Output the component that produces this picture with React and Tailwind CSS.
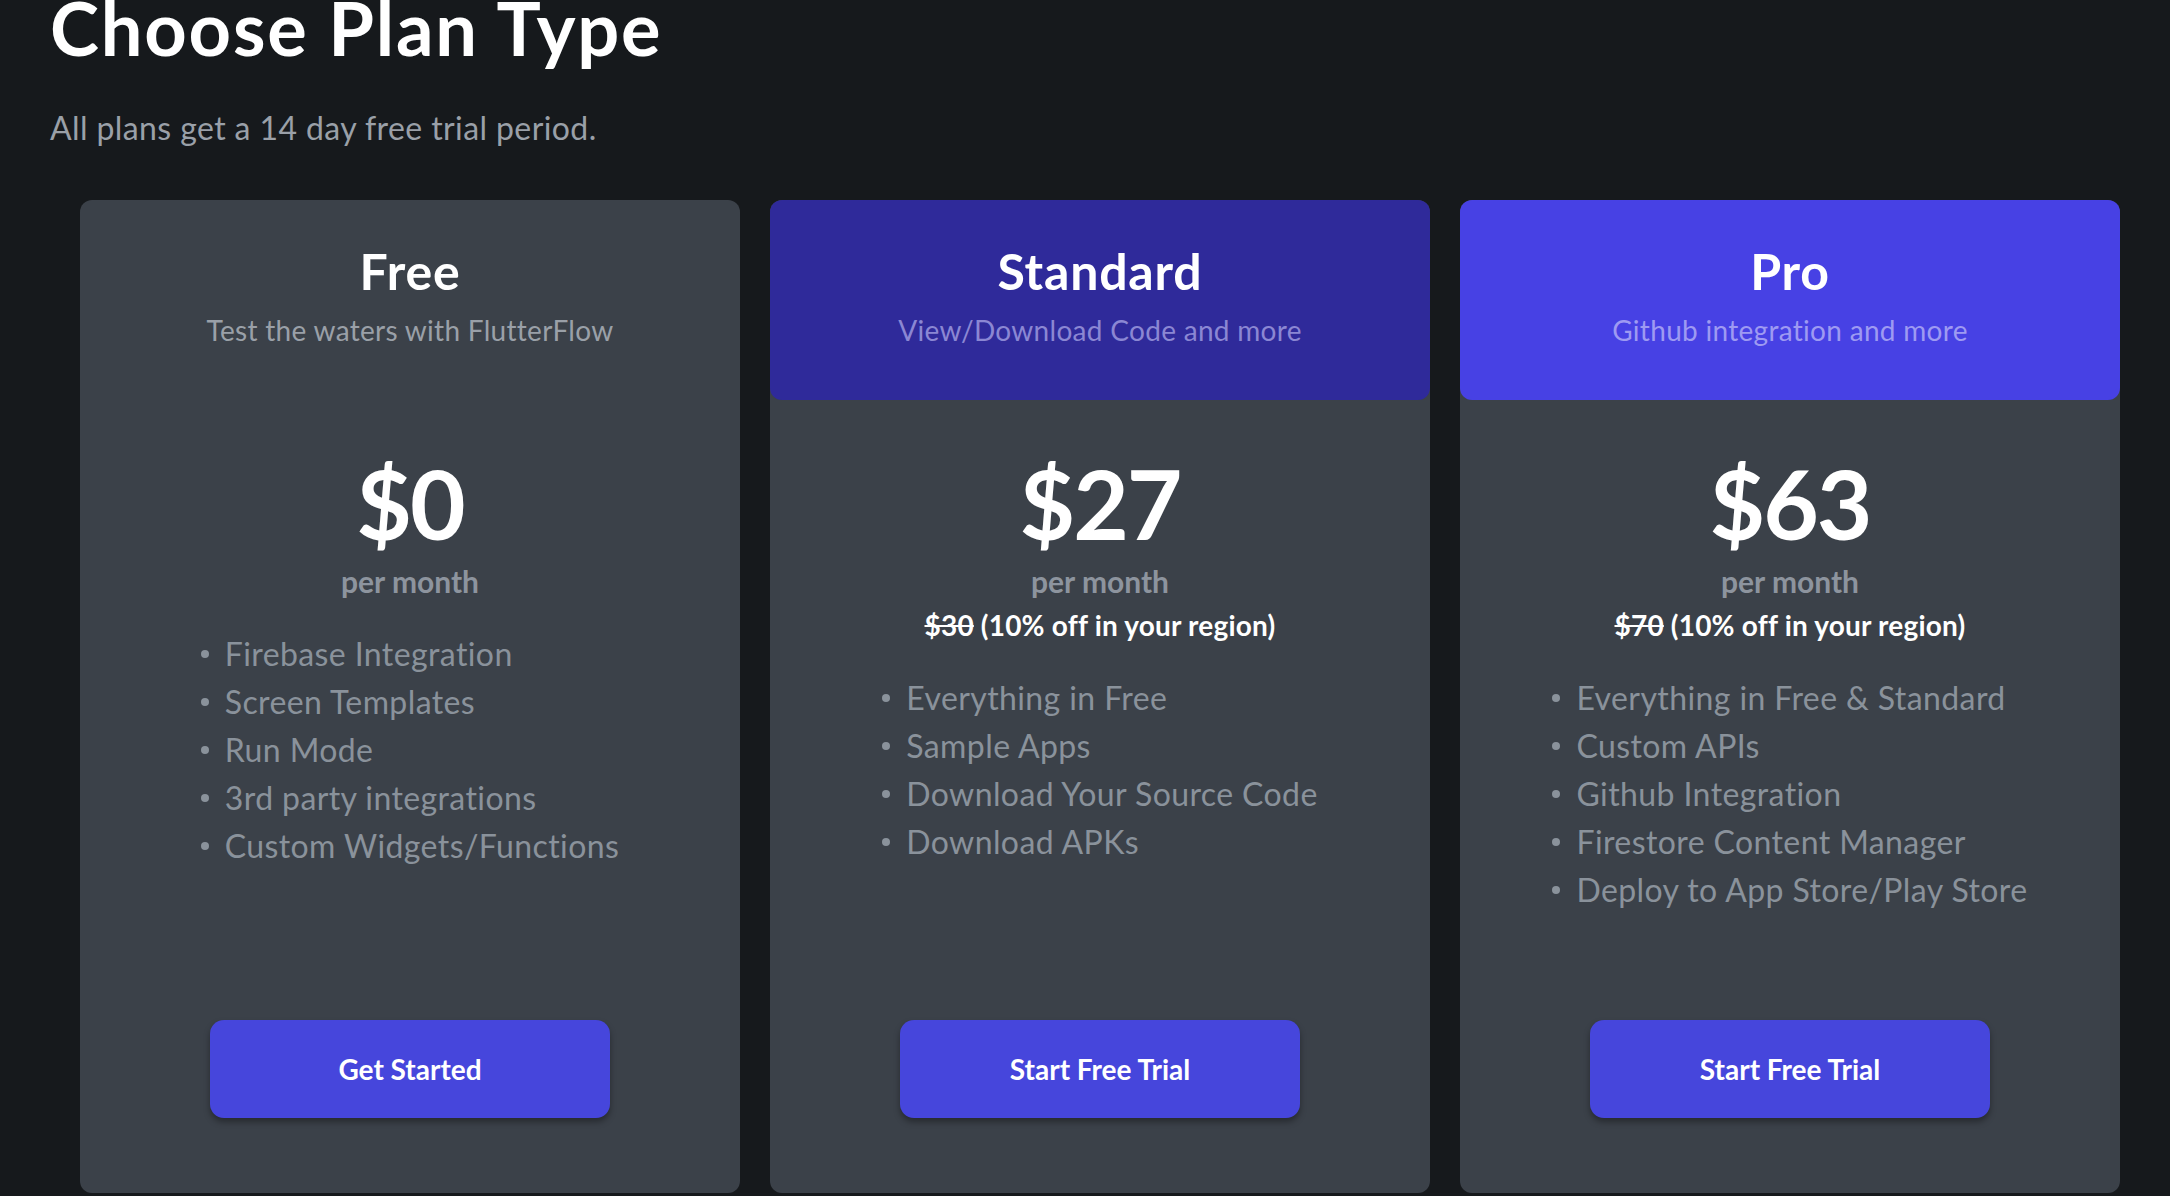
import React from "react";

const plans = [
  {
    name: "Free",
    tagline: "Test the waters with FlutterFlow",
    head: "bg-transparent",
    tagColor: "text-[#9aa0a8]",
    price: "$0",
    old: null,
    features: [
      "Firebase Integration",
      "Screen Templates",
      "Run Mode",
      "3rd party integrations",
      "Custom Widgets/Functions",
    ],
    cta: "Get Started",
  },
  {
    name: "Standard",
    tagline: "View/Download Code and more",
    head: "bg-[#2f2a9a]",
    tagColor: "text-[#8b87d3]",
    price: "$27",
    old: "$30",
    features: [
      "Everything in Free",
      "Sample Apps",
      "Download Your Source Code",
      "Download APKs",
    ],
    cta: "Start Free Trial",
  },
  {
    name: "Pro",
    tagline: "Github integration and more",
    head: "bg-[#4741e4]",
    tagColor: "text-[#9e9af2]",
    price: "$63",
    old: "$70",
    features: [
      "Everything in Free & Standard",
      "Custom APIs",
      "Github Integration",
      "Firestore Content Manager",
      "Deploy to App Store/Play Store",
    ],
    cta: "Start Free Trial",
  },
];

function Card({ p }) {
  return (
    <div className="w-[660px] h-[993px] shrink-0 rounded-[12px] bg-[#3b4149] flex flex-col">
      <div className={`h-[200px] rounded-[12px] ${p.head} flex flex-col items-center`}>
        <div className="mt-[41px] text-[50px] leading-[60px] font-bold text-white tracking-[0.8px]">
          {p.name}
        </div>
        <div className={`mt-[11px] text-[28px] leading-[36px] tracking-[0.3px] ${p.tagColor}`}>
          {p.tagline}
        </div>
      </div>
      <div className="flex flex-col items-center">
        <div className="mt-[53px] text-[96px] leading-[100px] font-bold text-white tracking-[-2px]">
          {p.price}
        </div>
        <div className="mt-[10px] text-[30px] leading-[36px] font-bold text-[#8d949e]">per month</div>
        {p.old && (
          <div className="mt-[8px] text-[28px] leading-[36px] font-bold text-white tracking-[0.2px]">
            <span className="line-through">{p.old}</span> (10% off in your region)
          </div>
        )}
        <ul className="mt-[31px] flex flex-col">
          {p.features.map((f) => (
            <li
              key={f}
              className="flex items-center h-[48px] text-[32px] tracking-[0.4px] text-[#8a929b]"
            >
              <span className="w-[8px] h-[8px] rounded-full bg-[#8a929b] mr-[16px]" />
              {f}
            </li>
          ))}
        </ul>
      </div>
      <div className="mt-auto mb-[75px] flex justify-center">
        <button className="w-[400px] h-[98px] rounded-[14px] bg-[#4646dc] text-white text-[28px] font-bold shadow-[0_4px_6px_rgba(0,0,0,0.35)]">
          {p.cta}
        </button>
      </div>
    </div>
  );
}

export default function App() {
  return (
    <div
      className="w-[2170px] h-[1196px] overflow-hidden bg-[#16191c]"
      style={{ fontFamily: "Lato, 'Noto Sans', sans-serif" }}
    >
      <div className="pl-[50px]">
        <h1 className="text-[74px] leading-[56px] font-bold text-white tracking-[1.8px]">
          Choose Plan Type
        </h1>
        <p className="mt-[52px] text-[32px] leading-[40px] tracking-[0.4px] text-[#9aa0a8]">
          All plans get a 14 day free trial period.
        </p>
      </div>
      <div className="flex gap-[30px] pl-[80px] mt-[52px]">
        {plans.map((p) => (
          <Card key={p.name} p={p} />
        ))}
      </div>
    </div>
  );
}
